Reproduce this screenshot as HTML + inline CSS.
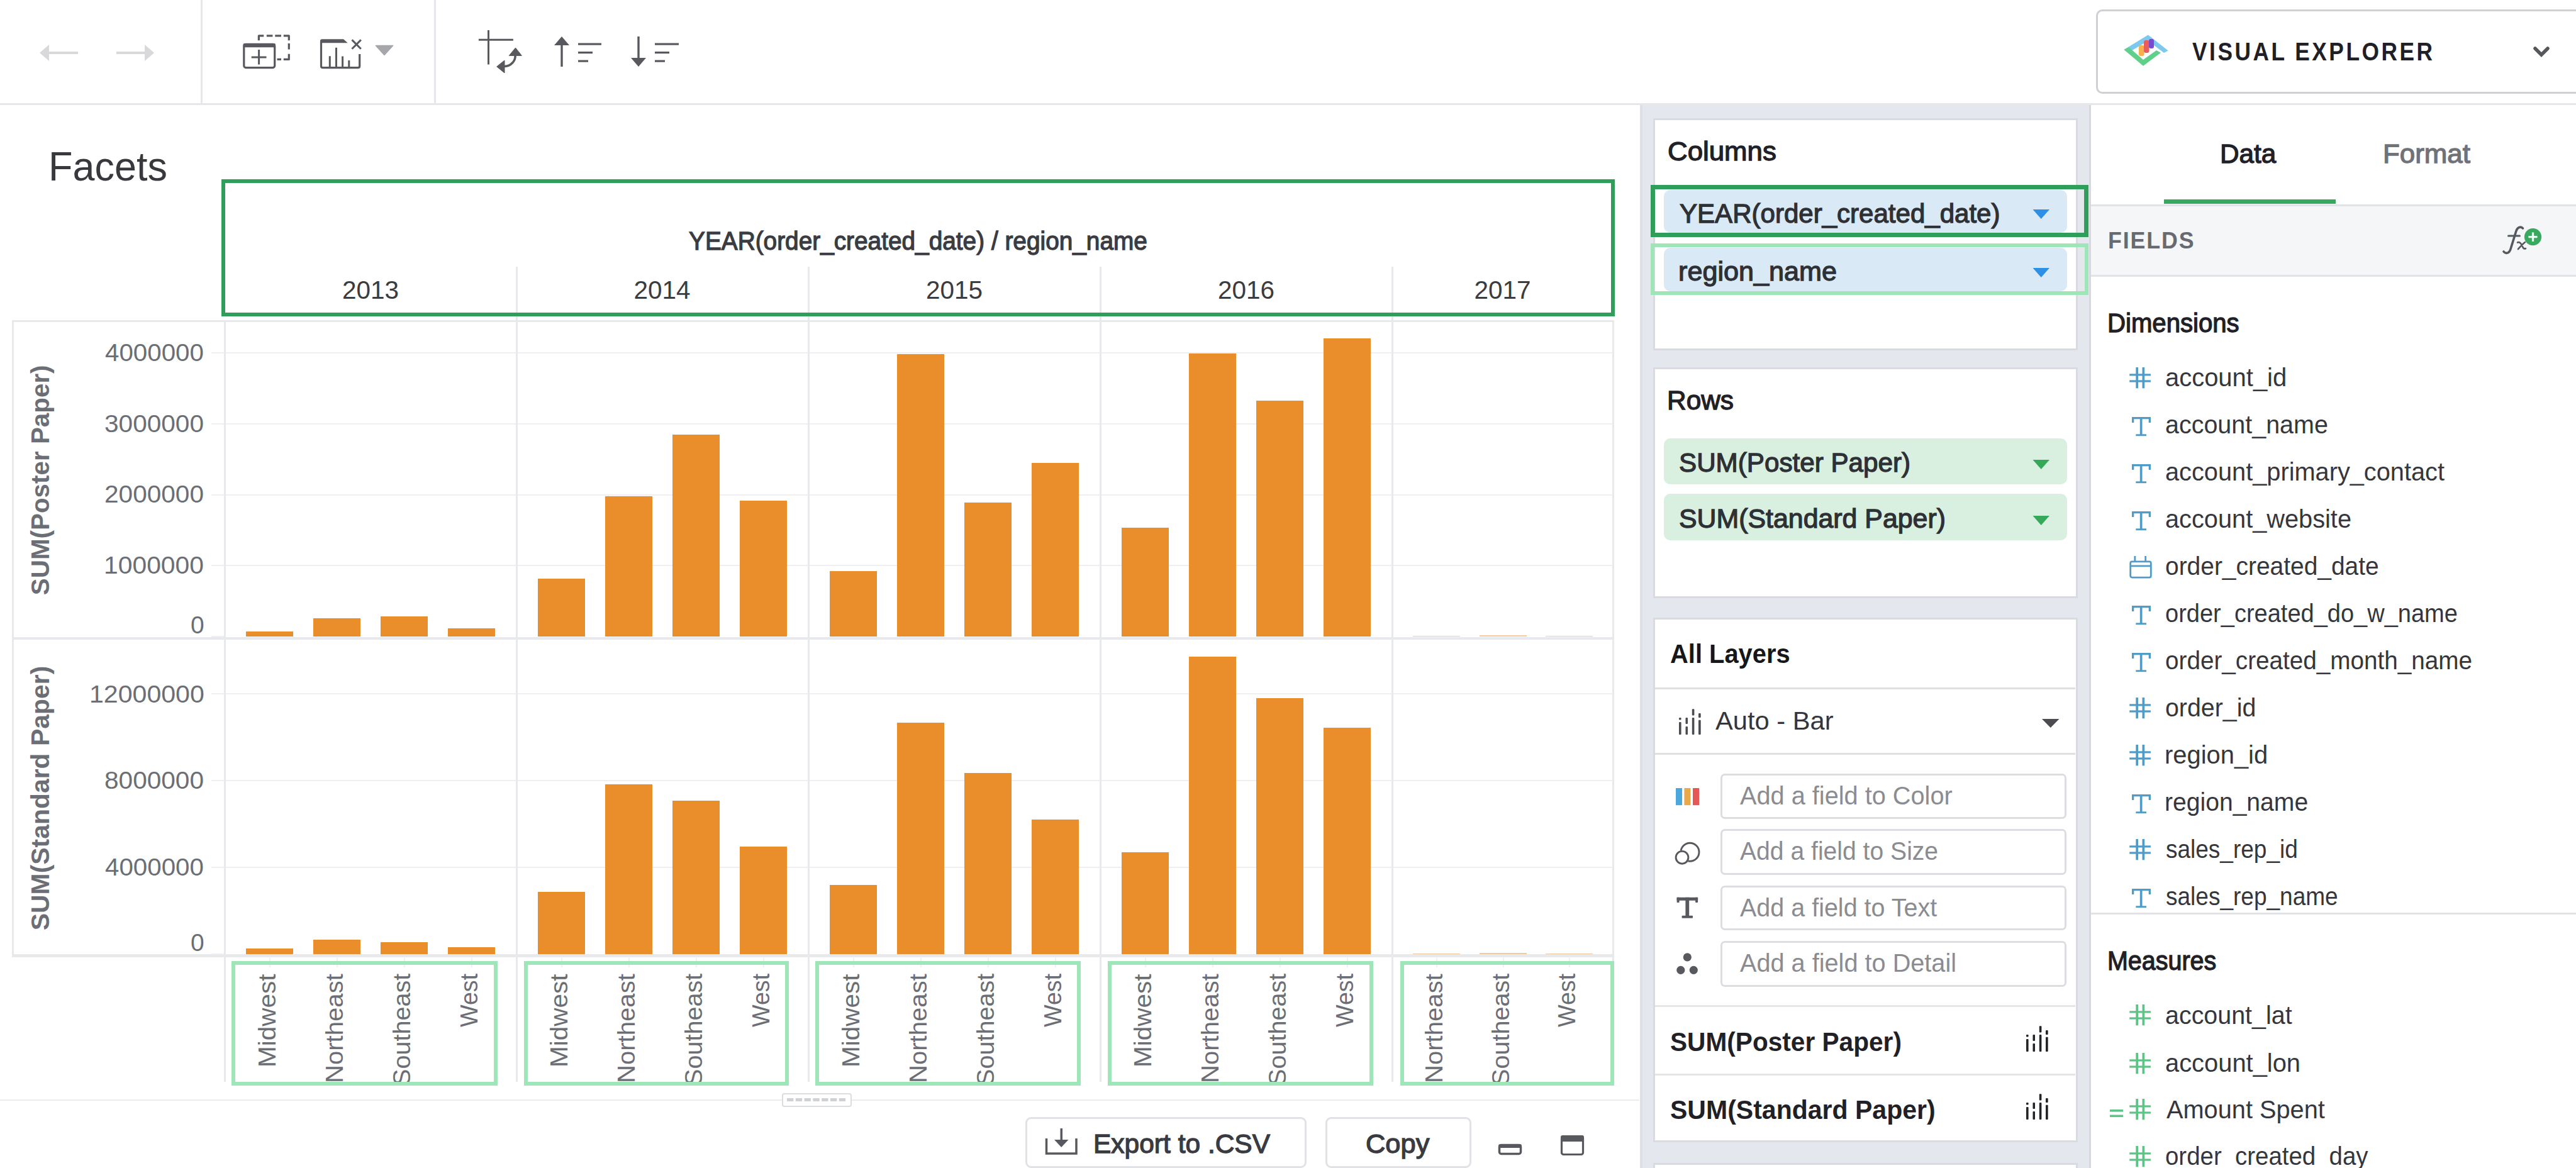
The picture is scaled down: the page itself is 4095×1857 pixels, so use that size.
<!DOCTYPE html>
<html><head><meta charset="utf-8"><style>
html,body{margin:0;padding:0}
body{width:4095px;height:1857px;overflow:hidden;position:relative;background:#fff;font-family:"Liberation Sans",sans-serif}
.t{position:absolute;white-space:nowrap;line-height:1;transform-origin:0 0}
svg{overflow:visible}
</style></head><body>
<div style="position:absolute;left:0px;top:164px;width:4095px;height:3px;background:#e6e7eb"></div><div style="position:absolute;left:319px;top:0px;width:2.5px;height:165px;background:#e6e7eb"></div><div style="position:absolute;left:690px;top:0px;width:2.5px;height:165px;background:#e6e7eb"></div><svg style="position:absolute;left:55px;top:60px" width="200" height="50" viewBox="0 0 200 50"><path d="M8 24 L23 11 L23 37 Z" fill="#d9d9dc"/><rect x="21" y="22" width="48" height="4" fill="#d9d9dc"/><path d="M190 24 L175 11 L175 37 Z" fill="#d9d9dc"/><rect x="130" y="22" width="47" height="4" fill="#d9d9dc"/></svg><svg style="position:absolute;left:380px;top:48px" width="90" height="70" viewBox="0 0 90 70"><g fill="none" stroke="#57595f" stroke-width="3.2" stroke-linejoin="round"><path d="M31.4 16.3 L31.4 8.9 L39.3 8.9 M43.8 8.9 L53.4 8.9 M57.3 8.9 L67 8.9 M70.8 8.9 L79.3 8.9 L79.3 16.3 M79.3 21 L79.3 30.4 M79.3 37.8 L79.3 46.4 L70.8 46.4 M60.5 46.4 L67 46.4"/><rect x="7.8" y="22.4" width="48.9" height="37.2" rx="3"/><path d="M31.6 31 L31.6 54.5 M19.7 42.9 L43.5 42.9" stroke-width="3"/></g><rect x="6.5" y="21" width="51.5" height="6.2" rx="2" fill="#57595f"/></svg><svg style="position:absolute;left:500px;top:55px" width="140" height="60" viewBox="0 0 140 60"><g fill="none" stroke="#57595f" stroke-width="3.2" stroke-linejoin="round"><path d="M71.7 31 L71.7 50 Q71.7 52.7 69 52.7 L13.2 52.7 Q10.5 52.7 10.5 50 L10.5 10"/><path d="M24.3 52.7 L24.3 34.2 M34.5 52.7 L34.5 20.8 M44.6 52.7 L44.6 34.5 M54.8 52.7 L54.8 41.1" stroke-width="3"/><path d="M59.5 8.4 L73.8 22.7 M73.8 8.4 L59.5 22.7" stroke-width="3"/></g><path d="M12 7.3 L46 7.3 L52.7 13.3 L9 13.3 L9 10 Q9 7.3 12 7.3 Z" fill="#57595f"/><path d="M97.4 17.5 L124.6 17.5 L111 32.4 Z" fill="#a5a7ab" stroke="#a5a7ab" stroke-width="1.5" stroke-linejoin="round"/></svg><svg style="position:absolute;left:755px;top:42px" width="80" height="80" viewBox="0 0 80 80"><g fill="none" stroke="#57595f" stroke-width="3"><path d="M21.5 6 L21.5 60.6 M5.9 21.3 L60.9 21.3"/><path d="M64.1 45 A 17 17 0 0 1 46 63.4" stroke-width="3.6"/></g><path d="M64.5 34 L54.3 46.4 L74.3 46.4 Z" fill="#57595f" stroke="#57595f" stroke-width="1" stroke-linejoin="round"/><path d="M34.7 63.9 L47 54 L47 74 Z" fill="#57595f" stroke="#57595f" stroke-width="1" stroke-linejoin="round"/></svg><svg style="position:absolute;left:875px;top:50px" width="90" height="62" viewBox="0 0 90 62"><path d="M6 22 L18 8 L30 22 Z" fill="#57595f"/><rect x="16.3" y="18" width="3.4" height="38" fill="#57595f"/><rect x="44" y="18.5" width="37" height="3.2" fill="#57595f"/><rect x="44" y="32" width="23" height="3.2" fill="#57595f"/><rect x="44" y="45.5" width="16" height="3.2" fill="#57595f"/></svg><svg style="position:absolute;left:997px;top:50px" width="90" height="62" viewBox="0 0 90 62"><path d="M6 42 L18 56 L30 42 Z" fill="#57595f"/><rect x="16.3" y="8" width="3.4" height="38" fill="#57595f"/><rect x="44" y="18.5" width="38" height="3.2" fill="#57595f"/><rect x="44" y="32" width="23" height="3.2" fill="#57595f"/><rect x="44" y="45.5" width="16" height="3.2" fill="#57595f"/></svg><div style="position:absolute;left:3332px;top:15px;width:900px;height:134px;box-sizing:border-box;border:3px solid #cfd0d3;border-radius:10px;background:#fff"></div><svg style="position:absolute;left:3370px;top:48px" width="85" height="64" viewBox="0 0 85 64"><path d="M6.4 31 L44.8 7.4 L76.6 32.4 L70 36 L44.8 17 L17 33.5 Z" fill="#7cc8ee"/><path d="M6.4 31 L37 56.7 L65 35.8 L58 32 L37 47 L14 27 Z" fill="#5fd08a"/><rect x="30" y="24" width="8.5" height="17" rx="3" fill="#f6b14d"/><rect x="38" y="16" width="8.5" height="20" rx="3" fill="#ea5d5d"/><rect x="46" y="14" width="8" height="15" rx="3" fill="#7a4bd0"/></svg><svg style="position:absolute;left:4026px;top:72px" width="36" height="26" viewBox="0 0 36 26"><path d="M4 5 L14 15 L24 5" fill="none" stroke="#55575c" stroke-width="5.5" stroke-linecap="round"/></svg><div style="position:absolute;left:19px;top:509px;width:2546px;height:2.5px;background:#e8e9ec"></div><div style="position:absolute;left:19px;top:509px;width:2.5px;height:1010px;background:#e8e9ec"></div><div style="position:absolute;left:19px;top:1013px;width:2546px;height:3.5px;background:#e8e9ec"></div><div style="position:absolute;left:19px;top:1517px;width:2546px;height:4.5px;background:#e8e9ec"></div><div style="position:absolute;left:2563px;top:509px;width:2.5px;height:1211px;background:#e8e9ec"></div><div style="position:absolute;left:336px;top:560px;width:2228px;height:2px;background:#efeff1"></div><div style="position:absolute;left:336px;top:673px;width:2228px;height:2px;background:#efeff1"></div><div style="position:absolute;left:336px;top:786px;width:2228px;height:2px;background:#efeff1"></div><div style="position:absolute;left:336px;top:898px;width:2228px;height:2px;background:#efeff1"></div><div style="position:absolute;left:336px;top:1102px;width:2228px;height:2px;background:#efeff1"></div><div style="position:absolute;left:336px;top:1240px;width:2228px;height:2px;background:#efeff1"></div><div style="position:absolute;left:336px;top:1378px;width:2228px;height:2px;background:#efeff1"></div><div style="position:absolute;left:336px;top:1011px;width:21px;height:2px;background:#efeff1"></div><div style="position:absolute;left:336px;top:1516px;width:21px;height:2px;background:#efeff1"></div><div style="position:absolute;left:356px;top:509px;width:2.5px;height:1211px;background:#e8e9ec"></div><div style="position:absolute;left:820px;top:424px;width:2.5px;height:1296px;background:#e8e9ec"></div><div style="position:absolute;left:1284px;top:424px;width:2.5px;height:1296px;background:#e8e9ec"></div><div style="position:absolute;left:1748px;top:424px;width:2.5px;height:1296px;background:#e8e9ec"></div><div style="position:absolute;left:2212px;top:424px;width:2.5px;height:1296px;background:#e8e9ec"></div><div style="position:absolute;left:391px;top:1003.5px;width:75px;height:8.5px;background:#ea8e2b"></div><div style="position:absolute;left:391px;top:1508px;width:75px;height:9px;background:#ea8e2b"></div><div style="position:absolute;left:428px;top:1521px;width:2px;height:17px;background:#f1f1f3"></div><div style="position:absolute;left:498px;top:983px;width:75px;height:29px;background:#ea8e2b"></div><div style="position:absolute;left:498px;top:1494px;width:75px;height:23px;background:#ea8e2b"></div><div style="position:absolute;left:535px;top:1521px;width:2px;height:17px;background:#f1f1f3"></div><div style="position:absolute;left:605px;top:980.4px;width:75px;height:31.600000000000023px;background:#ea8e2b"></div><div style="position:absolute;left:605px;top:1498px;width:75px;height:19px;background:#ea8e2b"></div><div style="position:absolute;left:642px;top:1521px;width:2px;height:17px;background:#f1f1f3"></div><div style="position:absolute;left:712px;top:998.6px;width:75px;height:13.399999999999977px;background:#ea8e2b"></div><div style="position:absolute;left:712px;top:1506px;width:75px;height:11px;background:#ea8e2b"></div><div style="position:absolute;left:749px;top:1521px;width:2px;height:17px;background:#f1f1f3"></div><div style="position:absolute;left:855px;top:920px;width:75px;height:92px;background:#ea8e2b"></div><div style="position:absolute;left:855px;top:1418px;width:75px;height:99px;background:#ea8e2b"></div><div style="position:absolute;left:892px;top:1521px;width:2px;height:17px;background:#f1f1f3"></div><div style="position:absolute;left:962px;top:788.6px;width:75px;height:223.39999999999998px;background:#ea8e2b"></div><div style="position:absolute;left:962px;top:1247px;width:75px;height:270px;background:#ea8e2b"></div><div style="position:absolute;left:999px;top:1521px;width:2px;height:17px;background:#f1f1f3"></div><div style="position:absolute;left:1069px;top:690.8px;width:75px;height:321.20000000000005px;background:#ea8e2b"></div><div style="position:absolute;left:1069px;top:1273px;width:75px;height:244px;background:#ea8e2b"></div><div style="position:absolute;left:1106px;top:1521px;width:2px;height:17px;background:#f1f1f3"></div><div style="position:absolute;left:1176px;top:795.8px;width:75px;height:216.20000000000005px;background:#ea8e2b"></div><div style="position:absolute;left:1176px;top:1346px;width:75px;height:171px;background:#ea8e2b"></div><div style="position:absolute;left:1213px;top:1521px;width:2px;height:17px;background:#f1f1f3"></div><div style="position:absolute;left:1319px;top:907.5px;width:75px;height:104.5px;background:#ea8e2b"></div><div style="position:absolute;left:1319px;top:1406.5px;width:75px;height:110.5px;background:#ea8e2b"></div><div style="position:absolute;left:1356px;top:1521px;width:2px;height:17px;background:#f1f1f3"></div><div style="position:absolute;left:1426px;top:563.3px;width:75px;height:448.70000000000005px;background:#ea8e2b"></div><div style="position:absolute;left:1426px;top:1148.6px;width:75px;height:368.4000000000001px;background:#ea8e2b"></div><div style="position:absolute;left:1463px;top:1521px;width:2px;height:17px;background:#f1f1f3"></div><div style="position:absolute;left:1533px;top:798.7px;width:75px;height:213.29999999999995px;background:#ea8e2b"></div><div style="position:absolute;left:1533px;top:1229px;width:75px;height:288px;background:#ea8e2b"></div><div style="position:absolute;left:1570px;top:1521px;width:2px;height:17px;background:#f1f1f3"></div><div style="position:absolute;left:1640px;top:736px;width:75px;height:276px;background:#ea8e2b"></div><div style="position:absolute;left:1640px;top:1303px;width:75px;height:214px;background:#ea8e2b"></div><div style="position:absolute;left:1677px;top:1521px;width:2px;height:17px;background:#f1f1f3"></div><div style="position:absolute;left:1783px;top:839.4px;width:75px;height:172.60000000000002px;background:#ea8e2b"></div><div style="position:absolute;left:1783px;top:1355px;width:75px;height:162px;background:#ea8e2b"></div><div style="position:absolute;left:1820px;top:1521px;width:2px;height:17px;background:#f1f1f3"></div><div style="position:absolute;left:1890px;top:562.3px;width:75px;height:449.70000000000005px;background:#ea8e2b"></div><div style="position:absolute;left:1890px;top:1043.6px;width:75px;height:473.4000000000001px;background:#ea8e2b"></div><div style="position:absolute;left:1927px;top:1521px;width:2px;height:17px;background:#f1f1f3"></div><div style="position:absolute;left:1997px;top:636.6px;width:75px;height:375.4px;background:#ea8e2b"></div><div style="position:absolute;left:1997px;top:1109.8px;width:75px;height:407.20000000000005px;background:#ea8e2b"></div><div style="position:absolute;left:2034px;top:1521px;width:2px;height:17px;background:#f1f1f3"></div><div style="position:absolute;left:2104px;top:538.4px;width:75px;height:473.6px;background:#ea8e2b"></div><div style="position:absolute;left:2104px;top:1156.8px;width:75px;height:360.20000000000005px;background:#ea8e2b"></div><div style="position:absolute;left:2141px;top:1521px;width:2px;height:17px;background:#f1f1f3"></div><div style="position:absolute;left:2245.5px;top:1010.5px;width:75px;height:1.5px;background:#f2c9a0"></div><div style="position:absolute;left:2245.5px;top:1515.5px;width:75px;height:1.5px;background:#f2c9a0"></div><div style="position:absolute;left:2282.5px;top:1521px;width:2px;height:17px;background:#f1f1f3"></div><div style="position:absolute;left:2351.5px;top:1010px;width:75px;height:2px;background:#f2c9a0"></div><div style="position:absolute;left:2351.5px;top:1514.5px;width:75px;height:2.5px;background:#f2c9a0"></div><div style="position:absolute;left:2388.5px;top:1521px;width:2px;height:17px;background:#f1f1f3"></div><div style="position:absolute;left:2456.5px;top:1011px;width:75px;height:1px;background:#f2c9a0"></div><div style="position:absolute;left:2456.5px;top:1516px;width:75px;height:1px;background:#f2c9a0"></div><div style="position:absolute;left:2493.5px;top:1521px;width:2px;height:17px;background:#f1f1f3"></div><div style="position:absolute;left:352px;top:285px;width:2215px;height:218px;box-sizing:border-box;border:6.5px solid #2f9e5a"></div><div style="position:absolute;left:368px;top:1528px;width:423px;height:198px;box-sizing:border-box;border:6px solid #9ee6b7"></div><div style="position:absolute;left:832.6px;top:1528px;width:421.9px;height:198px;box-sizing:border-box;border:6px solid #9ee6b7"></div><div style="position:absolute;left:1296px;top:1528px;width:422px;height:198px;box-sizing:border-box;border:6px solid #9ee6b7"></div><div style="position:absolute;left:1761px;top:1528px;width:422px;height:198px;box-sizing:border-box;border:6px solid #9ee6b7"></div><div style="position:absolute;left:2226px;top:1528px;width:340px;height:198px;box-sizing:border-box;border:6px solid #9ee6b7"></div><div style="position:absolute;left:0px;top:1748px;width:2606px;height:2px;background:#ececef"></div><div style="position:absolute;left:1243px;top:1738px;width:111px;height:22px;box-sizing:border-box;border:2px solid #dcdde0;border-radius:4px;background:#fff"></div><svg style="position:absolute;left:1251px;top:1745px" width="96" height="8" viewBox="0 0 96 8"><rect x="0.0" y="1" width="10.3" height="5" fill="#d0d1d4"/><rect x="13.8" y="1" width="10.3" height="5" fill="#d0d1d4"/><rect x="27.6" y="1" width="10.3" height="5" fill="#d0d1d4"/><rect x="41.400000000000006" y="1" width="10.3" height="5" fill="#d0d1d4"/><rect x="55.2" y="1" width="10.3" height="5" fill="#d0d1d4"/><rect x="69.0" y="1" width="10.3" height="5" fill="#d0d1d4"/><rect x="82.80000000000001" y="1" width="10.3" height="5" fill="#d0d1d4"/></svg><div style="position:absolute;left:1630px;top:1776px;width:447px;height:81px;box-sizing:border-box;border:3px solid #e1e2e5;border-radius:9px;background:#fff"></div><div style="position:absolute;left:2107px;top:1776px;width:232px;height:81px;box-sizing:border-box;border:3px solid #e1e2e5;border-radius:9px;background:#fff"></div><svg style="position:absolute;left:1660px;top:1792px" width="56" height="48" viewBox="0 0 56 48"><path d="M3.5 18 L3.5 42 L51 42 L51 18" fill="none" stroke="#57595f" stroke-width="3.5"/><rect x="25.5" y="2" width="3.5" height="22" fill="#57595f"/><path d="M16 20 L38.5 20 L27.2 32 Z" fill="#57595f"/></svg><svg style="position:absolute;left:2380px;top:1817px" width="44" height="22" viewBox="0 0 44 22"><rect x="3.5" y="3.5" width="34" height="14" rx="3" fill="none" stroke="#57595f" stroke-width="3.5"/><rect x="2" y="2" width="37" height="6" rx="3" fill="#57595f"/></svg><svg style="position:absolute;left:2479px;top:1803px" width="44" height="36" viewBox="0 0 44 36"><rect x="3.5" y="3.5" width="34" height="29" rx="3" fill="none" stroke="#57595f" stroke-width="3.2"/><rect x="2" y="2" width="37" height="10" rx="3" fill="#57595f"/></svg><div style="position:absolute;left:2607px;top:167px;width:714px;height:1690px;background:#e5e7ee;border-left:4px solid #dcdfe6;box-sizing:border-box"></div><div style="position:absolute;left:2628px;top:188px;width:675px;height:369px;box-sizing:border-box;border:3px solid #d9dbe1;background:#fff"></div><div style="position:absolute;left:2628px;top:584px;width:675px;height:367px;box-sizing:border-box;border:3px solid #d9dbe1;background:#fff"></div><div style="position:absolute;left:2628px;top:982px;width:675px;height:834px;box-sizing:border-box;border:3px solid #d9dbe1;background:#fff"></div><div style="position:absolute;left:2628px;top:1849px;width:675px;height:151px;box-sizing:border-box;border:3px solid #d9dbe1;background:#fff"></div><div style="position:absolute;left:2645px;top:301.5px;width:641px;height:68.5px;background:#d9e9f5;border-radius:10px"></div><svg style="position:absolute;left:3229px;top:330.25px" width="32" height="20" viewBox="0 0 32 20"><path d="M2.5 3 L29 3 L15.75 18 Z" fill="#2e90e4"/></svg><div style="position:absolute;left:2645px;top:394px;width:641px;height:69px;background:#d9e9f5;border-radius:10px"></div><svg style="position:absolute;left:3229px;top:423.0px" width="32" height="20" viewBox="0 0 32 20"><path d="M2.5 3 L29 3 L15.75 18 Z" fill="#2e90e4"/></svg><div style="position:absolute;left:2624px;top:293.6px;width:696px;height:83.89999999999998px;box-sizing:border-box;border:7px solid #2f9e5a"></div><div style="position:absolute;left:2624px;top:387px;width:696px;height:82px;box-sizing:border-box;border:6px solid #9ee6b7"></div><div style="position:absolute;left:2645px;top:697px;width:641px;height:73.39999999999998px;background:#d9f0e0;border-radius:10px"></div><svg style="position:absolute;left:3229px;top:728.2px" width="32" height="20" viewBox="0 0 32 20"><path d="M2.5 3 L29 3 L15.75 18 Z" fill="#34a95a"/></svg><div style="position:absolute;left:2645px;top:785.4px;width:641px;height:73.60000000000002px;background:#d9f0e0;border-radius:10px"></div><svg style="position:absolute;left:3229px;top:816.7px" width="32" height="20" viewBox="0 0 32 20"><path d="M2.5 3 L29 3 L15.75 18 Z" fill="#34a95a"/></svg><div style="position:absolute;left:2631px;top:1093px;width:668px;height:3px;background:#dfe0e4"></div><div style="position:absolute;left:2631px;top:1197px;width:668px;height:3px;background:#dfe0e4"></div><div style="position:absolute;left:2631px;top:1598px;width:668px;height:2.5px;background:#e4e5e8"></div><div style="position:absolute;left:2631px;top:1707px;width:668px;height:2.5px;background:#e4e5e8"></div><svg style="position:absolute;left:2668.5px;top:1126.6px" width="40" height="42" viewBox="0 0 40 42"><g fill="#4a4c52"><rect x="0" y="14" width="3.6" height="3.5" rx="1"/><rect x="0" y="21" width="3.6" height="20" rx="1"/><rect x="10.5" y="14" width="3.5" height="10" rx="1"/><rect x="10.5" y="28" width="3.5" height="13" rx="1"/><rect x="20.8" y="0.3" width="3.6" height="10.3" rx="1"/><rect x="20.8" y="14" width="3.6" height="27" rx="1"/><rect x="31" y="7" width="3.7" height="7" rx="1"/><rect x="31" y="17.8" width="3.7" height="23.2" rx="1"/></g></svg><svg style="position:absolute;left:3244px;top:1140px" width="32" height="20" viewBox="0 0 32 20"><path d="M2 3 L29.5 3 L15.75 17 Z" fill="#4a4c52"/></svg><div style="position:absolute;left:2735px;top:1230px;width:550px;height:72px;box-sizing:border-box;border:3px solid #dcdde0;border-radius:7px;background:#fff"></div><div style="position:absolute;left:2735px;top:1318px;width:550px;height:72.5px;box-sizing:border-box;border:3px solid #dcdde0;border-radius:7px;background:#fff"></div><div style="position:absolute;left:2735px;top:1408px;width:550px;height:71px;box-sizing:border-box;border:3px solid #dcdde0;border-radius:7px;background:#fff"></div><div style="position:absolute;left:2735px;top:1496px;width:550px;height:73px;box-sizing:border-box;border:3px solid #dcdde0;border-radius:7px;background:#fff"></div><svg style="position:absolute;left:2663.7px;top:1252.7px" width="40" height="29" viewBox="0 0 40 29"><rect x="0" y="0" width="10" height="27.2" fill="#4aa8dc"/><rect x="13.4" y="0" width="10" height="27.2" fill="#e9a94a"/><rect x="27" y="0" width="10.2" height="27.2" fill="#e55757"/></svg><svg style="position:absolute;left:2650px;top:1325px" width="70" height="60" viewBox="0 0 70 60"><defs><clipPath id="szc"><path d="M0 0 H70 V60 H0 Z M24 38.3 m-11.3 0 a11.3 11.3 0 1 0 22.6 0 a11.3 11.3 0 1 0 -22.6 0 Z" clip-rule="evenodd"/></clipPath></defs><g fill="none" stroke="#58595e" stroke-width="2.9"><circle cx="24" cy="38.3" r="9.9"/><circle cx="36.5" cy="29.8" r="14.5" clip-path="url(#szc)"/></g></svg><svg style="position:absolute;left:2664px;top:1425px" width="40" height="38" viewBox="0 0 40 38"><g fill="#57595f"><rect x="1.6" y="1.8" width="33.5" height="5" rx="0.8"/><rect x="1.6" y="1.8" width="4" height="8.2" rx="0.8"/><rect x="31.1" y="1.8" width="4" height="8.2" rx="0.8"/><rect x="15.4" y="1.8" width="5.8" height="32" /><rect x="9.6" y="30.8" width="17.4" height="3.9" rx="0.8"/></g></svg><svg style="position:absolute;left:2662px;top:1512px" width="42" height="40" viewBox="0 0 42 40"><g fill="#57595f"><circle cx="20.3" cy="9.8" r="6.6"/><circle cx="9.8" cy="30.3" r="6.6"/><circle cx="30.3" cy="30.3" r="6.6"/></g></svg><svg style="position:absolute;left:3221.3px;top:1631.3px" width="40" height="42" viewBox="0 0 40 42"><g fill="#222428"><rect x="0" y="14" width="3.6" height="3.5" rx="1"/><rect x="0" y="21" width="3.6" height="20" rx="1"/><rect x="10.5" y="14" width="3.5" height="10" rx="1"/><rect x="10.5" y="28" width="3.5" height="13" rx="1"/><rect x="20.8" y="0.3" width="3.6" height="10.3" rx="1"/><rect x="20.8" y="14" width="3.6" height="27" rx="1"/><rect x="31" y="7" width="3.7" height="7" rx="1"/><rect x="31" y="17.8" width="3.7" height="23.2" rx="1"/></g></svg><svg style="position:absolute;left:3221.3px;top:1739.3px" width="40" height="42" viewBox="0 0 40 42"><g fill="#222428"><rect x="0" y="14" width="3.6" height="3.5" rx="1"/><rect x="0" y="21" width="3.6" height="20" rx="1"/><rect x="10.5" y="14" width="3.5" height="10" rx="1"/><rect x="10.5" y="28" width="3.5" height="13" rx="1"/><rect x="20.8" y="0.3" width="3.6" height="10.3" rx="1"/><rect x="20.8" y="14" width="3.6" height="27" rx="1"/><rect x="31" y="7" width="3.7" height="7" rx="1"/><rect x="31" y="17.8" width="3.7" height="23.2" rx="1"/></g></svg><div style="position:absolute;left:3321px;top:167px;width:3px;height:1690px;background:#d6d8de"></div><div style="position:absolute;left:3440px;top:317.4px;width:273px;height:7px;background:#38a85d"></div><div style="position:absolute;left:3324px;top:325px;width:771px;height:3px;background:#e1e3e8"></div><div style="position:absolute;left:3324px;top:328px;width:771px;height:110px;background:#f5f6f8"></div><div style="position:absolute;left:3324px;top:437px;width:771px;height:3px;background:#e1e3e8"></div><svg style="position:absolute;left:3970px;top:350px" width="80" height="60" viewBox="0 0 80 60"><g fill="none" stroke="#55585e" stroke-linecap="round"><path d="M10 50 C 13 54, 19 53, 21 46 L 30 17 C 32 11, 37 9.5, 40.5 13" stroke-width="3.6"/><path d="M17.5 25 L35.5 25" stroke-width="3"/><path d="M32 35.5 C 36 34, 38 38, 40 42 C 41 45, 43 46, 45 45 M44 35 C 40 38, 36 43, 33 46" stroke-width="2.6"/></g><circle cx="56.5" cy="26.7" r="13.6" fill="#38a95e"/><path d="M56.5 19.5 L56.5 34 M49.5 26.7 L63.5 26.7" stroke="#fff" stroke-width="3.2"/></svg><svg style="position:absolute;left:3385px;top:584px" width="36" height="36" viewBox="0 0 36 36"><g fill="#519cc6"><rect x="10.3" y="0" width="3.7" height="33.3"/><rect x="20.5" y="0" width="3.7" height="33.3"/><rect x="0.2" y="10.3" width="33.7" height="3.2"/><rect x="0.2" y="20.4" width="33.7" height="3.2"/></g></svg><svg style="position:absolute;left:3385px;top:662.7px" width="36" height="32" viewBox="0 0 36 32"><g fill="#519cc6"><rect x="4" y="0" width="30" height="3.3"/><rect x="4" y="0" width="3.3" height="9"/><rect x="30.7" y="0" width="3.3" height="9"/><rect x="16.8" y="0" width="3.7" height="30"/><rect x="10.3" y="27.3" width="16.7" height="2.9"/></g></svg><svg style="position:absolute;left:3385px;top:737.7px" width="36" height="32" viewBox="0 0 36 32"><g fill="#519cc6"><rect x="4" y="0" width="30" height="3.3"/><rect x="4" y="0" width="3.3" height="9"/><rect x="30.7" y="0" width="3.3" height="9"/><rect x="16.8" y="0" width="3.7" height="30"/><rect x="10.3" y="27.3" width="16.7" height="2.9"/></g></svg><svg style="position:absolute;left:3385px;top:812.7px" width="36" height="32" viewBox="0 0 36 32"><g fill="#519cc6"><rect x="4" y="0" width="30" height="3.3"/><rect x="4" y="0" width="3.3" height="9"/><rect x="30.7" y="0" width="3.3" height="9"/><rect x="16.8" y="0" width="3.7" height="30"/><rect x="10.3" y="27.3" width="16.7" height="2.9"/></g></svg><svg style="position:absolute;left:3384px;top:882.5px" width="38" height="38" viewBox="0 0 38 38"><g fill="none" stroke="#519cc6" stroke-width="2.8"><rect x="2.7" y="9.9" width="32.6" height="25.2" rx="2.5"/><path d="M2.7 16.9 L35.3 16.9 M9.85 1.1 L9.85 9.9 M26.7 1.1 L26.7 9.9"/></g></svg><svg style="position:absolute;left:3385px;top:962.7px" width="36" height="32" viewBox="0 0 36 32"><g fill="#519cc6"><rect x="4" y="0" width="30" height="3.3"/><rect x="4" y="0" width="3.3" height="9"/><rect x="30.7" y="0" width="3.3" height="9"/><rect x="16.8" y="0" width="3.7" height="30"/><rect x="10.3" y="27.3" width="16.7" height="2.9"/></g></svg><svg style="position:absolute;left:3385px;top:1037.7px" width="36" height="32" viewBox="0 0 36 32"><g fill="#519cc6"><rect x="4" y="0" width="30" height="3.3"/><rect x="4" y="0" width="3.3" height="9"/><rect x="30.7" y="0" width="3.3" height="9"/><rect x="16.8" y="0" width="3.7" height="30"/><rect x="10.3" y="27.3" width="16.7" height="2.9"/></g></svg><svg style="position:absolute;left:3385px;top:1109px" width="36" height="36" viewBox="0 0 36 36"><g fill="#519cc6"><rect x="10.3" y="0" width="3.7" height="33.3"/><rect x="20.5" y="0" width="3.7" height="33.3"/><rect x="0.2" y="10.3" width="33.7" height="3.2"/><rect x="0.2" y="20.4" width="33.7" height="3.2"/></g></svg><svg style="position:absolute;left:3385px;top:1184px" width="36" height="36" viewBox="0 0 36 36"><g fill="#519cc6"><rect x="10.3" y="0" width="3.7" height="33.3"/><rect x="20.5" y="0" width="3.7" height="33.3"/><rect x="0.2" y="10.3" width="33.7" height="3.2"/><rect x="0.2" y="20.4" width="33.7" height="3.2"/></g></svg><svg style="position:absolute;left:3385px;top:1262.7px" width="36" height="32" viewBox="0 0 36 32"><g fill="#519cc6"><rect x="4" y="0" width="30" height="3.3"/><rect x="4" y="0" width="3.3" height="9"/><rect x="30.7" y="0" width="3.3" height="9"/><rect x="16.8" y="0" width="3.7" height="30"/><rect x="10.3" y="27.3" width="16.7" height="2.9"/></g></svg><svg style="position:absolute;left:3385px;top:1334px" width="36" height="36" viewBox="0 0 36 36"><g fill="#519cc6"><rect x="10.3" y="0" width="3.7" height="33.3"/><rect x="20.5" y="0" width="3.7" height="33.3"/><rect x="0.2" y="10.3" width="33.7" height="3.2"/><rect x="0.2" y="20.4" width="33.7" height="3.2"/></g></svg><svg style="position:absolute;left:3385px;top:1412.7px" width="36" height="32" viewBox="0 0 36 32"><g fill="#519cc6"><rect x="4" y="0" width="30" height="3.3"/><rect x="4" y="0" width="3.3" height="9"/><rect x="30.7" y="0" width="3.3" height="9"/><rect x="16.8" y="0" width="3.7" height="30"/><rect x="10.3" y="27.3" width="16.7" height="2.9"/></g></svg><div style="position:absolute;left:3324px;top:1451px;width:771px;height:3px;background:#e1e3e8"></div><svg style="position:absolute;left:3385px;top:1597.4px" width="36" height="36" viewBox="0 0 36 36"><g fill="#5fc387"><rect x="10.3" y="0" width="3.7" height="33.3"/><rect x="20.5" y="0" width="3.7" height="33.3"/><rect x="0.2" y="10.3" width="33.7" height="3.2"/><rect x="0.2" y="20.4" width="33.7" height="3.2"/></g></svg><svg style="position:absolute;left:3385px;top:1673.5px" width="36" height="36" viewBox="0 0 36 36"><g fill="#5fc387"><rect x="10.3" y="0" width="3.7" height="33.3"/><rect x="20.5" y="0" width="3.7" height="33.3"/><rect x="0.2" y="10.3" width="33.7" height="3.2"/><rect x="0.2" y="20.4" width="33.7" height="3.2"/></g></svg><svg style="position:absolute;left:3385px;top:1747.4px" width="36" height="36" viewBox="0 0 36 36"><g fill="#5fc387"><rect x="10.3" y="0" width="3.7" height="33.3"/><rect x="20.5" y="0" width="3.7" height="33.3"/><rect x="0.2" y="10.3" width="33.7" height="3.2"/><rect x="0.2" y="20.4" width="33.7" height="3.2"/></g></svg><svg style="position:absolute;left:3385px;top:1822px" width="36" height="36" viewBox="0 0 36 36"><g fill="#5fc387"><rect x="10.3" y="0" width="3.7" height="33.3"/><rect x="20.5" y="0" width="3.7" height="33.3"/><rect x="0.2" y="10.3" width="33.7" height="3.2"/><rect x="0.2" y="20.4" width="33.7" height="3.2"/></g></svg><svg style="position:absolute;left:3352px;top:1763px" width="26" height="16" viewBox="0 0 26 16"><g fill="#5fc387"><rect x="2" y="1" width="21" height="3.6"/><rect x="2" y="9.5" width="21" height="3.6"/></g></svg>
<div class="t" style="left:3485.00px;top:62.00px;font-size:40px;font-weight:700;color:#1e2026;letter-spacing:4px;transform:scaleX(0.8819);">VISUAL EXPLORER</div><div class="t" style="left:77.08px;top:232.60px;font-size:64px;font-weight:400;color:#38393d;transform:scaleX(0.9838);">Facets</div><div class="t" style="left:166.97px;top:540.85px;font-size:39px;font-weight:400;color:#6b6e74;transform:scaleX(1.0333);">4000000</div><div class="t" style="left:165.92px;top:653.55px;font-size:39px;font-weight:400;color:#6b6e74;transform:scaleX(1.0403);">3000000</div><div class="t" style="left:165.92px;top:766.35px;font-size:39px;font-weight:400;color:#6b6e74;transform:scaleX(1.0403);">2000000</div><div class="t" style="left:164.86px;top:878.85px;font-size:39px;font-weight:400;color:#6b6e74;transform:scaleX(1.0473);">1000000</div><div class="t" style="left:303.00px;top:973.85px;font-size:39px;font-weight:400;color:#6b6e74;">0</div><div class="t" style="left:141.84px;top:1084.35px;font-size:39px;font-weight:400;color:#6b6e74;transform:scaleX(1.0533);">12000000</div><div class="t" style="left:165.92px;top:1220.85px;font-size:39px;font-weight:400;color:#6b6e74;transform:scaleX(1.0403);">8000000</div><div class="t" style="left:166.97px;top:1358.85px;font-size:39px;font-weight:400;color:#6b6e74;transform:scaleX(1.0333);">4000000</div><div class="t" style="left:303.00px;top:1478.85px;font-size:39px;font-weight:400;color:#6b6e74;">0</div><div class="t" style="left:75.60px;top:908.73px;font-size:41.5px;font-weight:700;color:#6b6e74;transform-origin:2px 35.27px;transform:rotate(-90deg) scaleX(0.9731);">SUM(Poster Paper)</div><div class="t" style="left:75.60px;top:1441.72px;font-size:41.5px;font-weight:700;color:#6b6e74;transform-origin:2px 35.27px;transform:rotate(-90deg) scaleX(0.9858);">SUM(Standard Paper)</div><div class="t" style="left:1095.00px;top:362.57px;font-size:40.5px;font-weight:400;color:#3a3c42;-webkit-text-stroke:1.3px #3a3c42;transform:scaleX(0.9579);">YEAR(order_created_date) / region_name</div><div class="t" style="left:544.00px;top:440.57px;font-size:40.5px;font-weight:400;color:#3b3c40;">2013</div><div class="t" style="left:1007.50px;top:440.57px;font-size:40.5px;font-weight:400;color:#3b3c40;">2014</div><div class="t" style="left:1472.00px;top:440.57px;font-size:40.5px;font-weight:400;color:#3b3c40;">2015</div><div class="t" style="left:1936.00px;top:440.57px;font-size:40.5px;font-weight:400;color:#3b3c40;">2016</div><div class="t" style="left:2343.50px;top:440.57px;font-size:40.5px;font-weight:400;color:#3b3c40;">2017</div><div style="position:absolute;left:0px;top:1500px;width:2600px;height:220px;overflow:hidden"><div class="t" style="left:436.00px;top:160.70px;font-size:38.7px;font-weight:400;color:#6b6e74;transform-origin:3px 32.90px;transform:rotate(-90deg) scaleX(1.0475);">Midwest</div></div><div style="position:absolute;left:0px;top:1500px;width:2600px;height:220px;overflow:hidden"><div class="t" style="left:543.00px;top:186.11px;font-size:38.7px;font-weight:400;color:#6b6e74;transform-origin:3px 32.90px;transform:rotate(-90deg) scaleX(1.0364);">Northeast</div></div><div style="position:absolute;left:0px;top:1500px;width:2600px;height:220px;overflow:hidden"><div class="t" style="left:651.00px;top:191.11px;font-size:38.7px;font-weight:400;color:#6b6e74;transform-origin:2px 32.90px;transform:rotate(-90deg) scaleX(1.0233);">Southeast</div></div><div style="position:absolute;left:0px;top:1500px;width:2600px;height:220px;overflow:hidden"><div class="t" style="left:760.00px;top:99.70px;font-size:38.7px;font-weight:400;color:#6b6e74;transform-origin:0px 32.90px;transform:rotate(-90deg) scaleX(0.9724);">West</div></div><div style="position:absolute;left:0px;top:1500px;width:2600px;height:220px;overflow:hidden"><div class="t" style="left:900.00px;top:160.70px;font-size:38.7px;font-weight:400;color:#6b6e74;transform-origin:3px 32.90px;transform:rotate(-90deg) scaleX(1.0475);">Midwest</div></div><div style="position:absolute;left:0px;top:1500px;width:2600px;height:220px;overflow:hidden"><div class="t" style="left:1007.00px;top:186.11px;font-size:38.7px;font-weight:400;color:#6b6e74;transform-origin:3px 32.90px;transform:rotate(-90deg) scaleX(1.0364);">Northeast</div></div><div style="position:absolute;left:0px;top:1500px;width:2600px;height:220px;overflow:hidden"><div class="t" style="left:1115.00px;top:191.11px;font-size:38.7px;font-weight:400;color:#6b6e74;transform-origin:2px 32.90px;transform:rotate(-90deg) scaleX(1.0233);">Southeast</div></div><div style="position:absolute;left:0px;top:1500px;width:2600px;height:220px;overflow:hidden"><div class="t" style="left:1224.00px;top:99.70px;font-size:38.7px;font-weight:400;color:#6b6e74;transform-origin:0px 32.90px;transform:rotate(-90deg) scaleX(0.9724);">West</div></div><div style="position:absolute;left:0px;top:1500px;width:2600px;height:220px;overflow:hidden"><div class="t" style="left:1364.00px;top:160.70px;font-size:38.7px;font-weight:400;color:#6b6e74;transform-origin:3px 32.90px;transform:rotate(-90deg) scaleX(1.0475);">Midwest</div></div><div style="position:absolute;left:0px;top:1500px;width:2600px;height:220px;overflow:hidden"><div class="t" style="left:1471.00px;top:186.11px;font-size:38.7px;font-weight:400;color:#6b6e74;transform-origin:3px 32.90px;transform:rotate(-90deg) scaleX(1.0364);">Northeast</div></div><div style="position:absolute;left:0px;top:1500px;width:2600px;height:220px;overflow:hidden"><div class="t" style="left:1579.00px;top:191.11px;font-size:38.7px;font-weight:400;color:#6b6e74;transform-origin:2px 32.90px;transform:rotate(-90deg) scaleX(1.0233);">Southeast</div></div><div style="position:absolute;left:0px;top:1500px;width:2600px;height:220px;overflow:hidden"><div class="t" style="left:1688.00px;top:99.70px;font-size:38.7px;font-weight:400;color:#6b6e74;transform-origin:0px 32.90px;transform:rotate(-90deg) scaleX(0.9724);">West</div></div><div style="position:absolute;left:0px;top:1500px;width:2600px;height:220px;overflow:hidden"><div class="t" style="left:1828.00px;top:160.70px;font-size:38.7px;font-weight:400;color:#6b6e74;transform-origin:3px 32.90px;transform:rotate(-90deg) scaleX(1.0475);">Midwest</div></div><div style="position:absolute;left:0px;top:1500px;width:2600px;height:220px;overflow:hidden"><div class="t" style="left:1935.00px;top:186.11px;font-size:38.7px;font-weight:400;color:#6b6e74;transform-origin:3px 32.90px;transform:rotate(-90deg) scaleX(1.0364);">Northeast</div></div><div style="position:absolute;left:0px;top:1500px;width:2600px;height:220px;overflow:hidden"><div class="t" style="left:2043.00px;top:191.11px;font-size:38.7px;font-weight:400;color:#6b6e74;transform-origin:2px 32.90px;transform:rotate(-90deg) scaleX(1.0233);">Southeast</div></div><div style="position:absolute;left:0px;top:1500px;width:2600px;height:220px;overflow:hidden"><div class="t" style="left:2152.00px;top:99.70px;font-size:38.7px;font-weight:400;color:#6b6e74;transform-origin:0px 32.90px;transform:rotate(-90deg) scaleX(0.9724);">West</div></div><div style="position:absolute;left:0px;top:1500px;width:2600px;height:220px;overflow:hidden"><div class="t" style="left:2290.50px;top:186.11px;font-size:38.7px;font-weight:400;color:#6b6e74;transform-origin:3px 32.90px;transform:rotate(-90deg) scaleX(1.0364);">Northeast</div></div><div style="position:absolute;left:0px;top:1500px;width:2600px;height:220px;overflow:hidden"><div class="t" style="left:2397.50px;top:191.11px;font-size:38.7px;font-weight:400;color:#6b6e74;transform-origin:2px 32.90px;transform:rotate(-90deg) scaleX(1.0233);">Southeast</div></div><div style="position:absolute;left:0px;top:1500px;width:2600px;height:220px;overflow:hidden"><div class="t" style="left:2504.50px;top:99.70px;font-size:38.7px;font-weight:400;color:#6b6e74;transform-origin:0px 32.90px;transform:rotate(-90deg) scaleX(0.9724);">West</div></div><div class="t" style="left:1738.04px;top:1797.05px;font-size:43px;font-weight:400;color:#393b41;-webkit-text-stroke:1.3px #393b41;transform:scaleX(0.9883);">Export to .CSV</div><div class="t" style="left:2170.98px;top:1797.05px;font-size:43px;font-weight:400;color:#393b41;-webkit-text-stroke:1.3px #393b41;transform:scaleX(1.0101);">Copy</div><div class="t" style="left:2651.46px;top:220.30px;font-size:42px;font-weight:400;color:#1f2126;-webkit-text-stroke:1.3px #1f2126;transform:scaleX(1.0427);">Columns</div><div class="t" style="left:2670.00px;top:318.05px;font-size:43px;font-weight:400;color:#2d3035;-webkit-text-stroke:1.3px #2d3035;transform:scaleX(0.9778);">YEAR(order_created_date)</div><div class="t" style="left:2667.99px;top:410.45px;font-size:43px;font-weight:400;color:#2d3035;-webkit-text-stroke:1.3px #2d3035;transform:scaleX(1.0040);">region_name</div><div class="t" style="left:2649.97px;top:616.30px;font-size:42px;font-weight:400;color:#1f2126;-webkit-text-stroke:1.3px #1f2126;transform:scaleX(1.0099);">Rows</div><div class="t" style="left:2669.02px;top:714.15px;font-size:43px;font-weight:400;color:#2d3035;-webkit-text-stroke:1.3px #2d3035;transform:scaleX(0.9812);">SUM(Poster Paper)</div><div class="t" style="left:2669.00px;top:802.85px;font-size:43px;font-weight:400;color:#2d3035;-webkit-text-stroke:1.3px #2d3035;transform:scaleX(0.9967);">SUM(Standard Paper)</div><div class="t" style="left:2655.05px;top:1018.80px;font-size:42px;font-weight:700;color:#15171b;transform:scaleX(0.9495);">All Layers</div><div class="t" style="left:2727.00px;top:1126.15px;font-size:41px;font-weight:400;color:#34363b;transform:scaleX(1.0163);">Auto - Bar</div><div class="t" style="left:2766.00px;top:1245.15px;font-size:41px;font-weight:400;color:#8a8c91;transform:scaleX(0.9684);">Add a field to Color</div><div class="t" style="left:2766.00px;top:1333.15px;font-size:41px;font-weight:400;color:#8a8c91;transform:scaleX(0.9535);">Add a field to Size</div><div class="t" style="left:2766.00px;top:1423.15px;font-size:41px;font-weight:400;color:#8a8c91;transform:scaleX(0.9631);">Add a field to Text</div><div class="t" style="left:2766.00px;top:1511.15px;font-size:41px;font-weight:400;color:#8a8c91;transform:scaleX(0.9677);">Add a field to Detail</div><div class="t" style="left:2655.03px;top:1636.30px;font-size:42px;font-weight:700;color:#1f2126;transform:scaleX(0.9671);">SUM(Poster Paper)</div><div class="t" style="left:2655.02px;top:1744.30px;font-size:42px;font-weight:700;color:#1f2126;transform:scaleX(0.9767);">SUM(Standard Paper)</div><div class="t" style="left:3529.05px;top:223.45px;font-size:43px;font-weight:400;color:#1f2126;-webkit-text-stroke:1.3px #1f2126;transform:scaleX(0.9820);">Data</div><div class="t" style="left:3787.94px;top:223.45px;font-size:43px;font-weight:400;color:#6f7279;-webkit-text-stroke:1.3px #6f7279;transform:scaleX(1.0194);">Format</div><div class="t" style="left:3350.69px;top:363.82px;font-size:37.5px;font-weight:700;color:#676a70;letter-spacing:2px;transform:scaleX(0.9529);">FIELDS</div><div class="t" style="left:3349.73px;top:493.30px;font-size:42px;font-weight:400;color:#1f2126;-webkit-text-stroke:1.3px #1f2126;transform:scaleX(0.9556);">Dimensions</div><div class="t" style="left:3442.05px;top:580.15px;font-size:41px;font-weight:400;color:#35373c;transform:scaleX(0.9742);">account_id</div><div class="t" style="left:3442.08px;top:655.15px;font-size:41px;font-weight:400;color:#35373c;transform:scaleX(0.9623);">account_name</div><div class="t" style="left:3442.06px;top:730.15px;font-size:41px;font-weight:400;color:#35373c;transform:scaleX(0.9693);">account_primary_contact</div><div class="t" style="left:3442.06px;top:805.15px;font-size:41px;font-weight:400;color:#35373c;transform:scaleX(0.9692);">account_website</div><div class="t" style="left:3442.10px;top:879.65px;font-size:41px;font-weight:400;color:#35373c;transform:scaleX(0.9492);">order_created_date</div><div class="t" style="left:3442.15px;top:955.15px;font-size:41px;font-weight:400;color:#35373c;transform:scaleX(0.9271);">order_created_do_w_name</div><div class="t" style="left:3442.11px;top:1030.15px;font-size:41px;font-weight:400;color:#35373c;transform:scaleX(0.9434);">order_created_month_name</div><div class="t" style="left:3442.08px;top:1105.15px;font-size:41px;font-weight:400;color:#35373c;transform:scaleX(0.9589);">order_id</div><div class="t" style="left:3441.08px;top:1180.15px;font-size:41px;font-weight:400;color:#35373c;transform:scaleX(0.9730);">region_id</div><div class="t" style="left:3441.14px;top:1255.15px;font-size:41px;font-weight:400;color:#35373c;transform:scaleX(0.9532);">region_name</div><div class="t" style="left:3443.10px;top:1330.15px;font-size:41px;font-weight:400;color:#35373c;transform:scaleX(0.9022);">sales_rep_id</div><div class="t" style="left:3443.10px;top:1405.15px;font-size:41px;font-weight:400;color:#35373c;transform:scaleX(0.9027);">sales_rep_name</div><div class="t" style="left:3349.98px;top:1507.10px;font-size:42px;font-weight:400;color:#1f2126;-webkit-text-stroke:1.3px #1f2126;transform:scaleX(0.9392);">Measures</div><div class="t" style="left:3442.08px;top:1593.55px;font-size:41px;font-weight:400;color:#35373c;transform:scaleX(0.9614);">account_lat</div><div class="t" style="left:3442.06px;top:1669.65px;font-size:41px;font-weight:400;color:#35373c;transform:scaleX(0.9724);">account_lon</div><div class="t" style="left:3444.00px;top:1743.55px;font-size:41px;font-weight:400;color:#35373c;transform:scaleX(0.9692);">Amount Spent</div><div class="t" style="left:3442.13px;top:1818.15px;font-size:41px;font-weight:400;color:#35373c;transform:scaleX(0.9371);">order_created_day</div>
</body></html>
